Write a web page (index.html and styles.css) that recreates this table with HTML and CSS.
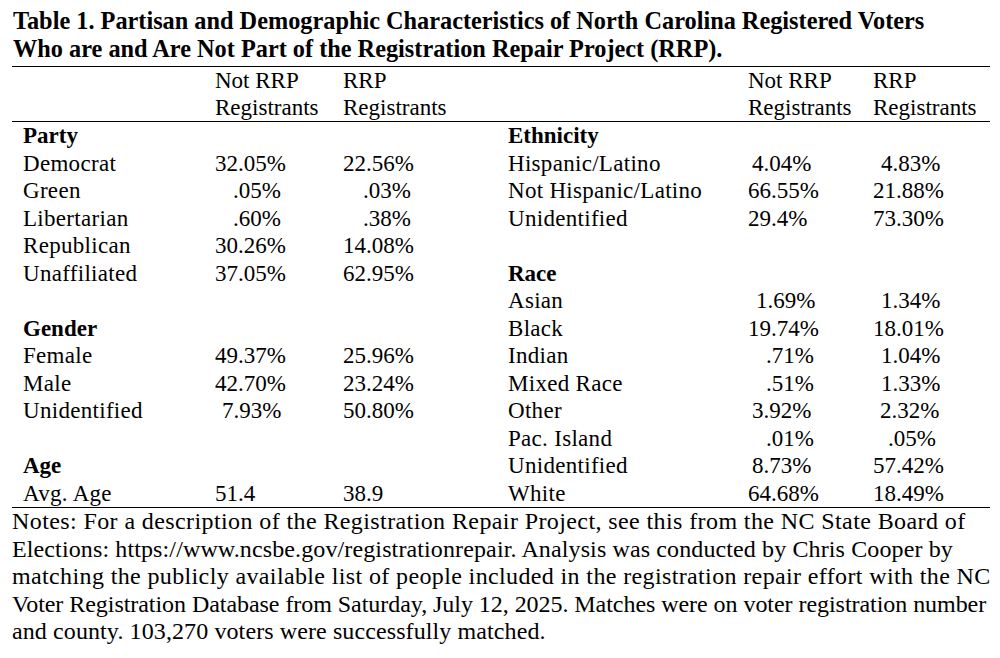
FILE: index.html
```html
<!DOCTYPE html>
<html lang="en">
<head>
<meta charset="utf-8">
<title>Table 1</title>
<link rel="stylesheet" href="styles.css">
</head>
<body>
<div class="page">
  <h1 class="title">Table 1. Partisan and Demographic Characteristics of North Carolina Registered Voters<br>Who are and Are Not Part of the Registration Repair Project (RRP).</h1>
  <table class="data">
    <colgroup>
      <col class="c-a"><col class="c-b"><col class="c-c"><col class="c-d"><col class="c-e"><col class="c-f">
    </colgroup>
    <thead>
      <tr><th></th><th>Not RRP</th><th>RRP</th><th></th><th>Not RRP</th><th>RRP</th></tr>
      <tr class="last"><th></th><th>Registrants</th><th>Registrants</th><th></th><th>Registrants</th><th>Registrants</th></tr>
    </thead>
    <tbody>
      <tr><td class="lab sec">Party</td><td></td><td></td><td class="lab sec">Ethnicity</td><td></td><td></td></tr>
      <tr><td class="lab">Democrat</td><td>32.05%</td><td>22.56%</td><td class="lab">Hispanic/Latino</td><td class="i4">4.04%</td><td class="i8">4.83%</td></tr>
      <tr><td class="lab">Green</td><td class="i18">.05%</td><td class="i20">.03%</td><td class="lab">Not Hispanic/Latino</td><td>66.55%</td><td>21.88%</td></tr>
      <tr><td class="lab">Libertarian</td><td class="i18">.60%</td><td class="i20">.38%</td><td class="lab">Unidentified</td><td>29.4%</td><td>73.30%</td></tr>
      <tr><td class="lab">Republican</td><td>30.26%</td><td>14.08%</td><td class="lab"></td><td></td><td></td></tr>
      <tr><td class="lab">Unaffiliated</td><td>37.05%</td><td>62.95%</td><td class="lab sec">Race</td><td></td><td></td></tr>
      <tr><td class="lab"></td><td></td><td></td><td class="lab">Asian</td><td class="i8">1.69%</td><td class="i8">1.34%</td></tr>
      <tr><td class="lab sec">Gender</td><td></td><td></td><td class="lab">Black</td><td>19.74%</td><td>18.01%</td></tr>
      <tr><td class="lab">Female</td><td>49.37%</td><td>25.96%</td><td class="lab">Indian</td><td class="i18">.71%</td><td class="i8">1.04%</td></tr>
      <tr><td class="lab">Male</td><td>42.70%</td><td>23.24%</td><td class="lab">Mixed Race</td><td class="i18">.51%</td><td class="i8">1.33%</td></tr>
      <tr><td class="lab">Unidentified</td><td class="i7">7.93%</td><td>50.80%</td><td class="lab">Other</td><td class="i4">3.92%</td><td class="i7">2.32%</td></tr>
      <tr><td class="lab"></td><td></td><td></td><td class="lab">Pac. Island</td><td class="i18">.01%</td><td class="i15">.05%</td></tr>
      <tr><td class="lab sec">Age</td><td></td><td></td><td class="lab">Unidentified</td><td class="i4">8.73%</td><td>57.42%</td></tr>
      <tr><td class="lab">Avg. Age</td><td>51.4</td><td>38.9</td><td class="lab">White</td><td>64.68%</td><td>18.49%</td></tr>
    </tbody>
  </table>
  <p class="notes"><span class="ln ln1">Notes: For a description of the Registration Repair Project, see this from the NC State Board of</span><span class="ln ln2">Elections: https://www.ncsbe.gov/registrationrepair. Analysis was conducted by Chris Cooper by</span><span class="ln ln3">matching the publicly available list of people included in the registration repair effort with the NC</span><span class="ln ln4">Voter Registration Database from Saturday, July 12, 2025. Matches were on voter registration number</span><span class="ln ln5">and county. 103,270 voters were successfully matched.</span></p>
</div>
</body>
</html>
```

FILE: styles.css
```css
html, body {
  margin: 0;
  padding: 0;
  background: #ffffff;
}

body {
  color: #000000;
  font-family: "Liberation Serif", "Times New Roman", serif;
}

.page {
  width: 978px;
  padding: 7px 0 0 12px;
}

.title {
  margin: 0;
  padding-left: 1px;
  font-size: 24.3px;
  line-height: 28px;
  font-weight: bold;
  white-space: nowrap;
}

.data {
  width: 978px;
  table-layout: fixed;
  border-collapse: collapse;
  border-top: 1px solid #000;
  border-bottom: 1px solid #000;
  margin-top: 3px;
  font-size: 23px;
}

.c-a { width: 203px; }
.c-b { width: 128px; }
.c-c { width: 165px; }
.c-d { width: 240px; }
.c-e { width: 125px; }
.c-f { width: 117px; }

.data th {
  font-weight: normal;
  text-align: left;
  padding: 0;
  height: 27px;
  line-height: 27px;
  white-space: nowrap;
}

.data thead tr.last th {
  border-bottom: 1px solid #000;
}

.data td {
  padding: 0;
  height: 27.5px;
  line-height: 27.5px;
  white-space: nowrap;
  text-align: left;
}

.data td.lab {
  letter-spacing: 0.3px;
}

.data td.lab:first-child {
  padding-left: 11px;
}

.data td.sec {
  font-weight: bold;
  letter-spacing: 0;
}

.data td.i4 { padding-left: 4px; }
.data td.i7 { padding-left: 7px; }
.data td.i8 { padding-left: 8px; }
.data td.i15 { padding-left: 15px; }
.data td.i18 { padding-left: 18px; }
.data td.i20 { padding-left: 20px; }

.notes {
  margin: 0;
  font-size: 24px;
  line-height: 27.5px;
  white-space: nowrap;
}

.notes .ln {
  display: block;
}

.notes .ln1 { letter-spacing: 0.4px; }
.notes .ln2 { letter-spacing: 0.12px; }
.notes .ln3 { letter-spacing: 0.37px; }
.notes .ln4 { letter-spacing: -0.05px; }
.notes .ln5 { letter-spacing: 0.1px; }
```
